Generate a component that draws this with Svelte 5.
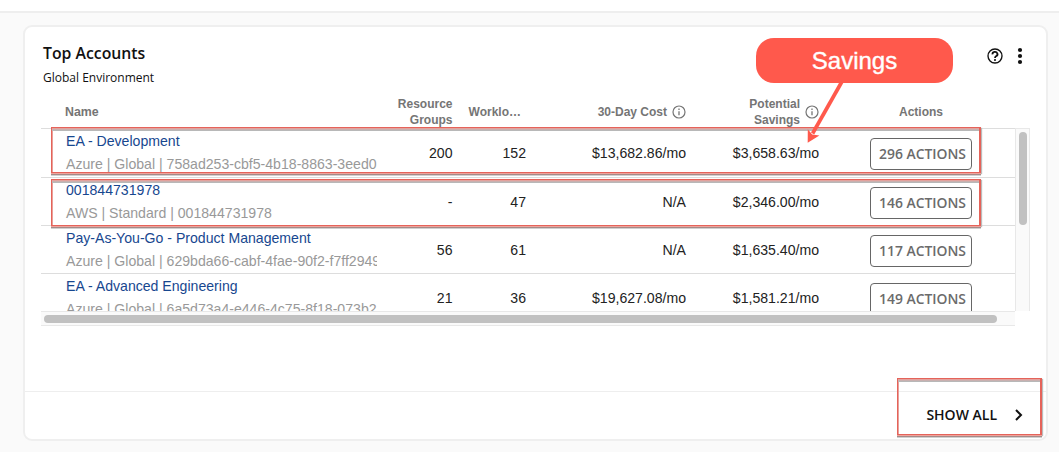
<script>
  const rows = [
    { name: 'EA - Development', sub: 'Azure | Global | 758ad253-cbf5-4b18-8863-3eed0', groups: '200', work: '152', cost: '$13,682.86/mo', savings: '$3,658.63/mo', actions: 296 },
    { name: '001844731978', sub: 'AWS | Standard | 001844731978', groups: '-', work: '47', cost: 'N/A', savings: '$2,346.00/mo', actions: 146 },
    { name: 'Pay-As-You-Go - Product Management', sub: 'Azure | Global | 629bda66-cabf-4fae-90f2-f7ff2949', groups: '56', work: '61', cost: 'N/A', savings: '$1,635.40/mo', actions: 117 },
    { name: 'EA - Advanced Engineering', sub: 'Azure | Global | 6a5d73a4-e446-4c75-8f18-073b2', groups: '21', work: '36', cost: '$19,627.08/mo', savings: '$1,581.21/mo', actions: 149 }
  ];
</script>

{#snippet info()}
  <svg class="info" width="14" height="14" viewBox="0 0 14 14">
    <circle cx="7" cy="7" r="6" fill="none" stroke="#757575" stroke-width="1.2" />
    <path d="M7 6.2v4.1M7 3.6v1.3" stroke="#757575" stroke-width="1.3" />
  </svg>
{/snippet}

<div class="page">
  <div class="topbar"></div>
  <section class="card">
    <header>
      <div>
        <h2>Top Accounts</h2>
        <p>Global Environment</p>
      </div>
      <div class="tools">
        <svg width="16" height="16" viewBox="0 0 16 16">
          <circle cx="8" cy="8" r="7" fill="none" stroke="#111" stroke-width="1.35" />
          <path d="M5.5 6.3a2.5 2.2 0 1 1 3.8 1.7C8.4 8.6 8 8.9 8 10" fill="none" stroke="#111" stroke-width="1.8" />
          <circle cx="8" cy="12" r="1.05" fill="#111" />
        </svg>
        <svg width="6" height="18" viewBox="0 0 6 18" fill="#111">
          <circle cx="3" cy="3" r="2.1" /><circle cx="3" cy="9" r="2.1" /><circle cx="3" cy="15" r="2.1" />
        </svg>
      </div>
    </header>

    <div class="table">
      <div class="cols head">
        <div class="left">Name</div>
        <div class="wrap"><span>Resource<br />Groups</span></div>
        <div class="work">Worklo…</div>
        <div class="with-icon"><span>30-Day Cost</span>{@render info()}</div>
        <div class="with-icon"><span>Potential<br />Savings</span>{@render info()}</div>
        <div class="center">Actions</div>
      </div>
      <div class="body">
        <div class="rows">
          {#each rows as row}
            <div class="cols row">
              <div class="name">
                <a>{row.name}</a>
                <span>{row.sub}</span>
              </div>
              <div class="num">{row.groups}</div>
              <div class="num">{row.work}</div>
              <div class="num">{row.cost}</div>
              <div class="num">{row.savings}</div>
              <button>{row.actions} ACTIONS</button>
            </div>
          {/each}
        </div>
        <div class="vscroll"><i></i></div>
      </div>
      <div class="hscroll"><i></i></div>
    </div>

    <footer>
      <span>SHOW ALL</span>
      <svg width="10" height="14" viewBox="0 0 10 14"><path d="M2 2l5 5-5 5" fill="none" stroke="#111" stroke-width="2" /></svg>
    </footer>
  </section>

  <div class="mark first"></div>
  <div class="mark second"></div>
  <div class="mark third"></div>
  <div class="callout">Savings</div>
  <svg class="arrow" width="60" height="70" viewBox="0 0 60 70">
    <path d="M41.7 2L12.6 53.5" stroke="#ff594c" stroke-width="3.7" />
    <path d="M7.7 62.8L7.8 49.2L12.2 54.6L19.4 55.4Z" fill="#ff594c" />
  </svg>
</div>

<style>
  :global(body) { background: #fff; }
  .page { position: relative; box-sizing: border-box; width: 1059px; height: 452px; background: #fafafa; font-family: "Liberation Sans", Arial, sans-serif; overflow: hidden; }
  .topbar { height: 11px; background: #fff; border-bottom: 2px solid #eee; }
  .card { box-sizing: border-box; width: 1025px; height: 416px; margin: 12px 0 0 23px; background: #fff; border: 2px solid #efefef; border-radius: 9px; display: flex; flex-direction: column; }
  header { display: flex; justify-content: space-between; height: 69px; padding: 0 23px 0 18px; font-family: "Open Sans", sans-serif; }
  h2 { margin: 15px 0 0; font-size: 15.8px; line-height: 23px; font-weight: 600; color: #111; }
  p { margin: 4px 0 0; font-size: 12px; line-height: 18px; color: #111; }
  .tools { display: flex; gap: 14px; align-items: center; height: 18px; margin-top: 20px; }
  .table { width: 989px; margin-left: 16px; }
  .cols { display: grid; grid-template-columns: 336px 75.5px 73.5px 160px 133px 51px 102px 43px; }
  .head { height: 32px; align-items: center; font-size: 12px; line-height: 16px; font-weight: bold; color: #757575; }
  .head > div { text-align: right; }
  .head .left { text-align: left; padding-left: 24px; font-size: 12.4px; }
  .head .work { padding-right: 5px; }
  .head .with-icon { display: flex; justify-content: flex-end; align-items: center; gap: 5px; }
  .head .center { grid-column: 7; text-align: center; }
  .info { flex: none; }
  .body { display: flex; height: 183px; }
  .rows { width: 974px; overflow: hidden; }
  .row { box-sizing: border-box; height: 48px; border-top: 1px solid #ddd; font-size: 14.1px; }
  .row:first-child { height: 49px; }
  .name { display: flex; flex-direction: column; padding: 1px 0 0 25px; overflow: hidden; white-space: nowrap; line-height: 23px; }
  .name a { color: #17478f; }
  .name span { color: #999; }
  .num { text-align: right; line-height: 49px; color: #222; }
  button { grid-column: 7; box-sizing: border-box; height: 32px; margin-top: 9px; padding: 0 0 2px 3px; border: 1px solid #666; border-radius: 4px; background: #fff; color: #6b6b6b; font: 600 13.9px "Open Sans", sans-serif; white-space: nowrap; }
  .vscroll { box-sizing: border-box; width: 15px; background: #fafafa; border: 1px solid #e8e8e8; border-bottom: 0; padding: 3px 3px 0; }
  .vscroll i { display: block; width: 8px; height: 93px; border-radius: 4px; background: #c1c1c1; }
  .hscroll { box-sizing: border-box; width: 974px; height: 15px; background: #fafafa; border-top: 1px solid #e8e8e8; border-bottom: 1px solid #e8e8e8; padding: 3px 0 0 3px; }
  .hscroll i { display: block; width: 953px; height: 8px; border-radius: 4px; background: #c1c1c1; }
  footer { box-sizing: border-box; margin-top: auto; height: 48px; padding: 0 22px 2px 0; border-top: 1px solid #eee; display: flex; align-items: center; justify-content: flex-end; gap: 17px; font: 600 14px "Open Sans", sans-serif; color: #111; }
  .mark { position: absolute; box-sizing: border-box; border: 1px solid #e5635a; border-width: 1px 2px 1px 1px; box-shadow: inset 0 1px #e3a29d, inset 0 2px #c9b0af, inset 0 3px #b8b8b8, inset 1px 0 #e9a09a, 0 1px #f0a39c, 0 2px #a58b89, 0 3px #d0d0d0, 1px 1px 1px #bbb; }
  .first { left: 51px; top: 127px; width: 930px; height: 46px; }
  .second { left: 51px; top: 179px; width: 930px; height: 47px; }
  .third { left: 897px; top: 378px; width: 145px; height: 57px; }
  .callout { position: absolute; left: 756px; top: 38px; width: 197px; height: 45px; border-radius: 18px; background: #ff594c; color: #fff; font-size: 24px; line-height: 45px; text-align: center; -webkit-text-stroke: .4px #fff; }
  .arrow { position: absolute; left: 800px; top: 80px; }
</style>
